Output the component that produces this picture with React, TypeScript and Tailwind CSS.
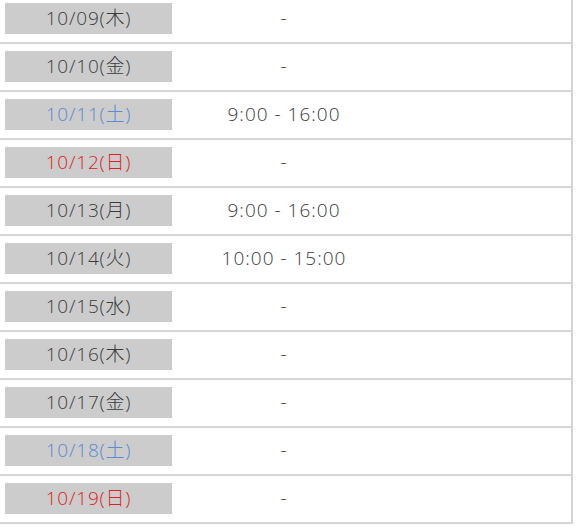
const days = [
  { date: "10/09(木)", time: "-" },
  { date: "10/10(金)", time: "-" },
  { date: "10/11(土)", time: "9:00 - 16:00", kind: "sat" },
  { date: "10/12(日)", time: "-", kind: "sun" },
  { date: "10/13(月)", time: "9:00 - 16:00" },
  { date: "10/14(火)", time: "10:00 - 15:00" },
  { date: "10/15(水)", time: "-" },
  { date: "10/16(木)", time: "-" },
  { date: "10/17(金)", time: "-" },
  { date: "10/18(土)", time: "-", kind: "sat" },
  { date: "10/19(日)", time: "-", kind: "sun" },
];

export default function App() {
  return (
    <div className="h-[527px] w-[576px] overflow-hidden bg-white font-['Open_Sans','Noto_Sans_CJK_JP',sans-serif] font-light text-[#3c3c3c]">
      <div className="-mt-[4px] w-[573px] border-r-2 border-[#d4d4d4]">
        {days.map((d, i) => (
          <div key={i} className="flex h-[48px] border-b-2 border-[#d6d6d6]">
            <div className="w-[176px] pl-[5px] pt-[7px]">
              <div
                className={
                  "flex h-[31px] w-[167px] items-center justify-center bg-[#cccccc] text-[19px] tracking-[0.8px] " +
                  (d.kind === "sat" ? "text-[#5b8bd0]" : d.kind === "sun" ? "text-[#e0201c]" : "text-[#3c3c3c]")
                }
              >
                {d.date}
              </div>
            </div>
            <div className="flex w-[216px] items-center justify-center pb-[2px] text-[19px] tracking-[1px]">
              {d.time}
            </div>
            <div className="flex-1" />
          </div>
        ))}
      </div>
    </div>
  );
}
